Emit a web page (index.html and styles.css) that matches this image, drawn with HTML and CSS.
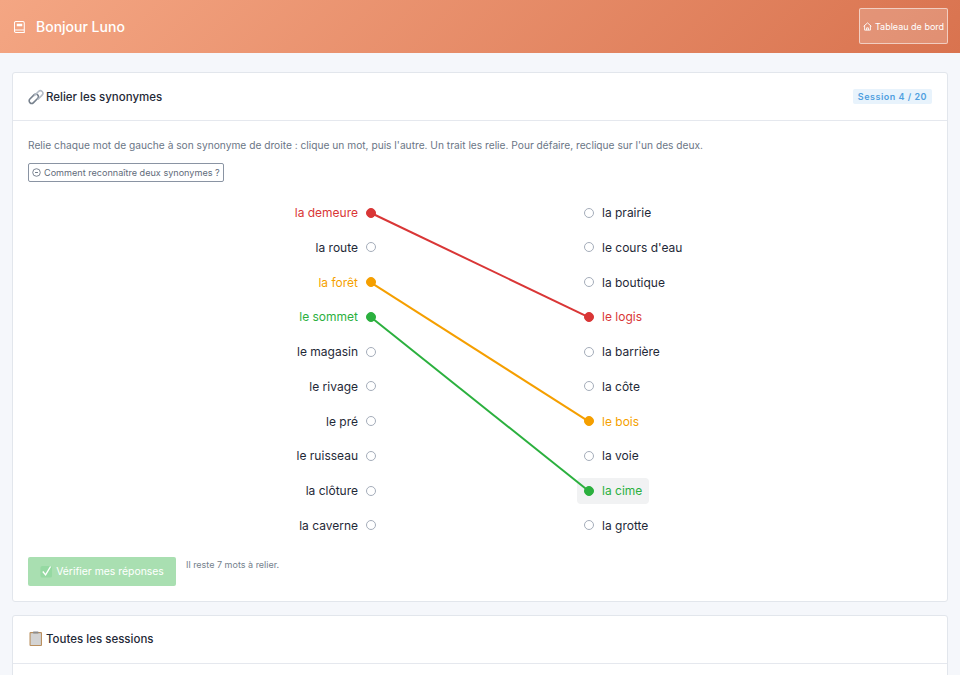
FILE: index.html
```html
<!DOCTYPE html>
<html lang="fr">
<head>
  <meta charset="UTF-8" />
  <title>Bonjour Luno</title>
  <link rel="stylesheet" href="styles.css">
</head>
<body>

  <header class="topbar">
    <div class="brand">
      <svg class="brand-icon" viewBox="0 0 12 13" width="11" height="12"><path d="M2.2 0.5h7.3a1.7 1.7 0 0 1 1.7 1.7v10.3H2.2A1.7 1.7 0 0 1 0.5 10.8V2.2A1.7 1.7 0 0 1 2.2 0.5z" fill="none" stroke="#fff" stroke-width="1.1"/><path d="M3 3h6v2.6H3zM1 9.3h10v1.1H1z" fill="#fff"/></svg>
      <span>Bonjour Luno</span>
    </div>
    <a class="dash-btn" href="#">
      <svg viewBox="0 0 10 10" width="9" height="9"><path d="M0.7 4.8 5 1l4.3 3.8M1.8 4v5h6.4V4M4 9V6.5h2V9" fill="none" stroke="#fff" stroke-width="1"/></svg>
      Tableau de bord
    </a>
  </header>

  <main class="page">
    <section class="card">
      <div class="card-head">
        <h2>
          <svg class="emoji" viewBox="0 0 16 16" width="16" height="16"><g fill="none" stroke-linecap="round"><path d="M1.9 10 6 5.9a2.5 2.5 0 0 1 3.6 3.6L5.5 13.6A2.5 2.5 0 0 1 1.9 10z" stroke="#77818d" stroke-width="1.6"/><path d="M6.6 6.4 10.5 2.5a2.5 2.5 0 0 1 3.6 3.6L10 10.2" stroke="#b4bcc6" stroke-width="1.6"/></g></svg>
          Relier les synonymes
        </h2>
        <span class="badge">Session 4 / 20</span>
      </div>
      <div class="card-body">
        <p class="hint">Relie chaque mot de gauche à son synonyme de droite : clique un mot, puis l'autre. Un trait les relie. Pour défaire, reclique sur l'un des deux.</p>
        <button class="help-btn">
          <svg viewBox="0 0 10 10" width="9" height="9"><circle cx="5" cy="5" r="4.2" fill="none" stroke="#5f6b7a" stroke-width="0.9"/><path d="M3.4 5h3.2" stroke="#5f6b7a" stroke-width="1"/></svg>
          Comment reconnaître deux synonymes ?
        </button>

        <div class="match">
          <svg class="links" width="904" height="339" viewBox="0 0 904 339">
            <line x1="343" y1="13" x2="561" y2="117.3" stroke="#d93636" stroke-width="2"/>
            <line x1="343" y1="82.6" x2="561" y2="221.7" stroke="#f59f00" stroke-width="2"/>
            <line x1="343" y1="117.3" x2="561" y2="291.2" stroke="#2bb03e" stroke-width="2"/>
          </svg>
          <div class="col col-left">
            <div class="word red">la demeure<i class="dot"></i></div>
            <div class="word">la route<i class="dot"></i></div>
            <div class="word orange">la forêt<i class="dot"></i></div>
            <div class="word green">le sommet<i class="dot"></i></div>
            <div class="word">le magasin<i class="dot"></i></div>
            <div class="word">le rivage<i class="dot"></i></div>
            <div class="word">le pré<i class="dot"></i></div>
            <div class="word">le ruisseau<i class="dot"></i></div>
            <div class="word">la clôture<i class="dot"></i></div>
            <div class="word">la caverne<i class="dot"></i></div>
          </div>
          <div class="col col-right">
            <div class="word"><i class="dot"></i>la prairie</div>
            <div class="word"><i class="dot"></i>le cours d'eau</div>
            <div class="word"><i class="dot"></i>la boutique</div>
            <div class="word red"><i class="dot"></i>le logis</div>
            <div class="word"><i class="dot"></i>la barrière</div>
            <div class="word"><i class="dot"></i>la côte</div>
            <div class="word orange"><i class="dot"></i>le bois</div>
            <div class="word"><i class="dot"></i>la voie</div>
            <div class="word green hover"><i class="dot"></i>la cime</div>
            <div class="word"><i class="dot"></i>la grotte</div>
          </div>
        </div>

        <div class="actions">
          <button class="check-btn">
            <svg viewBox="0 0 14 14" width="13" height="13"><rect x="0.5" y="1" width="12.5" height="12.5" rx="2" fill="#95d9a2"/><path d="M3 7l3 3.6L11.4 1.6" fill="none" stroke="#fff" stroke-width="1.5"/></svg>
            Vérifier mes réponses
          </button>
          <span class="remain">Il reste 7 mots à relier.</span>
        </div>
      </div>
    </section>

    <section class="card">
      <div class="card-head">
        <h2>
          <svg class="emoji" viewBox="0 0 16 16" width="16" height="16"><rect x="1.5" y="1" width="12.5" height="14" rx="1" fill="#b98f5e"/><rect x="2.6" y="2.2" width="10.3" height="11.8" fill="#d3d3d3"/><rect x="5" y="0.4" width="5.5" height="2" rx="0.6" fill="#8d8d8d"/></svg>
          Toutes les sessions
        </h2>
      </div>
      <div class="card-body"></div>
    </section>
  </main>

</body>
</html>
```

FILE: styles.css
```css
* { margin: 0; padding: 0; box-sizing: border-box; }

html, body { height: 100%; overflow: hidden; }

body {
  font-family: 'Inter', 'Liberation Sans', sans-serif;
  background: #f5f7fb;
  color: #1f2937;
}

.topbar {
  height: 53px;
  display: flex;
  align-items: center;
  justify-content: space-between;
  padding: 0 12px 0 14px;
  background: linear-gradient(135deg, #f4a683 0%, #d9734f 100%);
  color: #fff;
}

.brand {
  display: flex;
  align-items: center;
  gap: 11px;
  font-size: 14px;
  font-weight: 500;
}

.dash-btn {
  width: 89px;
  height: 36px;
  margin-top: -1px;
  display: flex;
  align-items: center;
  justify-content: center;
  gap: 3px;
  font-size: 9px;
  color: #fff;
  text-decoration: none;
  white-space: nowrap;
  background: rgba(255,255,255,0.2);
  border: 1px solid rgba(255,255,255,0.55);
  border-radius: 2px;
}

.page {
  padding: 19px 12px 0;
  display: flex;
  flex-direction: column;
  gap: 13px;
}

.card {
  background: #fff;
  border: 1px solid #e2e6ec;
  border-radius: 3px;
  flex-shrink: 0;
}

.card-head {
  height: 48px;
  padding: 0 15px;
  display: flex;
  align-items: center;
  justify-content: space-between;
  border-bottom: 1px solid #e5e8ee;
}

.card-head h2 {
  display: flex;
  align-items: center;
  gap: 2px;
  font-size: 11.5px;
  font-weight: 500;
  color: #1f2937;
}

.badge {
  padding: 2px 5px;
  font-size: 9px;
  font-weight: 600;
  letter-spacing: 0.5px;
  color: #4f9fe0;
  background: #e8f3fc;
  border-radius: 2px;
}

.card-body { padding: 16px 15px 15px; }

.hint {
  font-size: 10.2px;
  line-height: 16px;
  color: #6b7686;
}

.help-btn {
  margin-top: 10px;
  height: 19px;
  padding: 0 3px;
  display: flex;
  align-items: center;
  gap: 3px;
  font-family: inherit;
  font-size: 9.1px;
  color: #5f6b7a;
  background: #fff;
  border: 1.5px solid #8a94a3;
  border-radius: 2px;
}

.match {
  position: relative;
  margin-top: 17.5px;
  display: flex;
  justify-content: center;
  gap: 194px;
}

.links {
  position: absolute;
  top: 0;
  left: 0;
  pointer-events: none;
}

.col {
  width: 200px;
  display: flex;
  flex-direction: column;
  gap: 8.78px;
}

.col-left { align-items: flex-end; }
.col-right { align-items: flex-start; }

.word {
  height: 26px;
  padding: 0 7px;
  display: flex;
  align-items: center;
  gap: 8px;
  font-size: 12px;
  color: #1f2937;
  border-radius: 4px;
}

.dot {
  position: relative;
  width: 10px;
  height: 10px;
  border: 1.5px solid #a5adba;
  border-radius: 50%;
  background: #fff;
}

.word.red { color: #d93636; }
.word.orange { color: #f59f00; }
.word.green { color: #2bb03e; }
.word.red .dot { background: #d93636; border-color: #d93636; }
.word.orange .dot { background: #f59f00; border-color: #f59f00; }
.word.green .dot { background: #2bb03e; border-color: #2bb03e; }
.word.hover { background: #f1f2f3; }

.actions {
  margin-top: 18.5px;
  display: flex;
  align-items: flex-start;
  gap: 10px;
}

.check-btn {
  width: 148px;
  height: 29px;
  display: flex;
  align-items: center;
  justify-content: center;
  gap: 3px;
  font-family: inherit;
  font-size: 10.4px;
  color: #fff;
  background: #a9dfb1;
  border: none;
  border-radius: 2px;
}

.remain {
  margin-top: 2px;
  font-size: 9px;
  color: #757f8d;
}
```
